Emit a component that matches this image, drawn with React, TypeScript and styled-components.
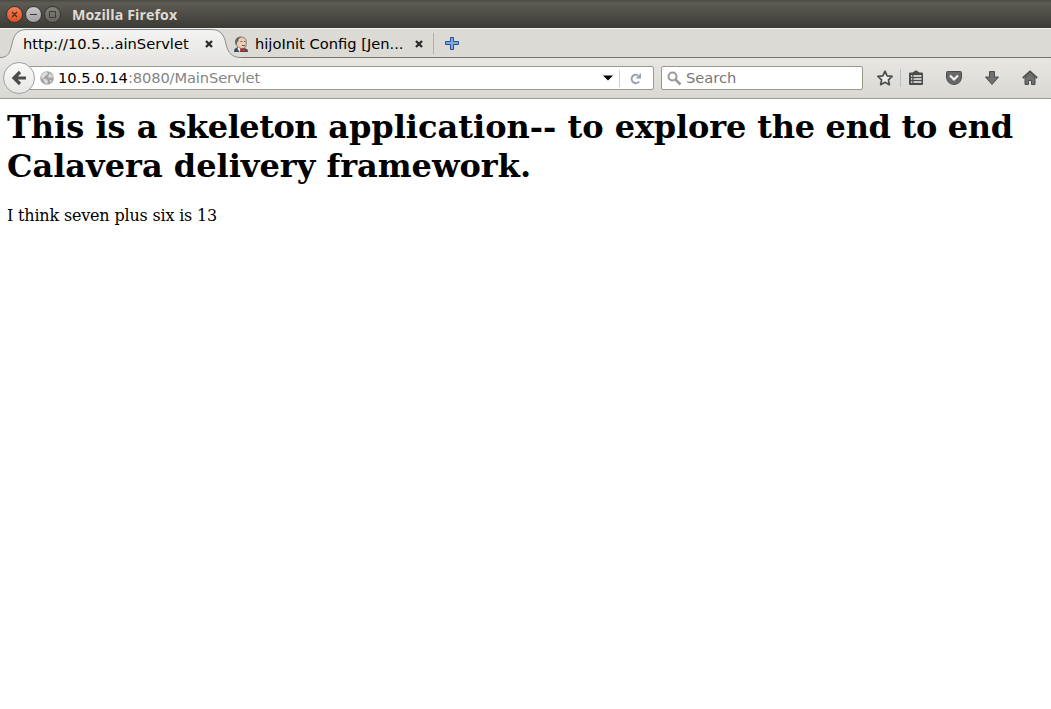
import React from "react";
import styled, { createGlobalStyle } from "styled-components";

const GlobalStyle = createGlobalStyle`
  body { margin: 0; background: #fff; overflow: hidden; }
  * { box-sizing: border-box; }
`;

const Window = styled.div`
  display: flex;
  flex-direction: column;
  width: 1051px;
  height: 709px;
  background: #fff;
  color: #000;
  font: 14.67px "DejaVu Sans", sans-serif;
  white-space: nowrap;
`;

const TitleBar = styled.header`
  display: flex;
  align-items: center;
  height: 28px;
  padding: 1px 0 0 6px;
  gap: 2px;
  background: linear-gradient(#4b4944 0, #5d5b52 3px, #3d3c37 27px, #3c3b37 28px);
`;

const WindowButton = styled.span<{ $kind: "close" | "min" | "max" }>`
  display: flex;
  width: 17px;
  height: 17px;
  border-radius: 50%;
  border: 1px solid #33322e;
  background: ${(p) =>
    p.$kind === "close"
      ? "linear-gradient(#f58058, #e3501f)"
      : p.$kind === "min"
        ? "linear-gradient(#c9c8c8, #a19f9f)"
        : "linear-gradient(#83817a, #66645d)"};
`;

const Title = styled.h1`
  margin: 0 0 0 9px;
  font: bold 14.2px/20px "Open Sans", sans-serif;
  letter-spacing: 0.1px;
  color: #dfdbd2;
`;

const TabStrip = styled.nav`
  display: flex;
  height: 30px;
  background: #dbdad5;
  border-top: 1px solid #f5f4f2;
  border-bottom: 1px solid #77756f;
`;

const Tab = styled.div<{ $width: number; $left: number }>`
  position: relative;
  display: flex;
  align-items: center;
  width: ${(p) => p.$width}px;
  height: 29px;
  padding: 1px 0 0 ${(p) => p.$left}px;
`;

const TabShape = styled.svg`
  position: absolute;
  left: 0;
  top: 0;
`;

const TabLabel = styled.span<{ $width: number; $gap?: number }>`
  position: relative;
  width: ${(p) => p.$width}px;
  padding: 0 0 2px ${(p) => p.$gap ?? 0}px;
`;

const Icon = styled.svg`
  position: relative;
  display: block;
  flex: none;
`;

const NewTab = styled.div`
  display: flex;
  align-items: center;
  margin: 4px 0 3px;
  padding-left: 11px;
  border-left: 1px solid #b0afaa;
`;

const Toolbar = styled.div`
  display: flex;
  align-items: center;
  height: 41px;
  padding: 0 12px 1px 3px;
  background: linear-gradient(#e7e6e2, #d9d8d3);
  border-bottom: 1px solid #9c988c;
`;

const BackButton = styled.div`
  position: relative;
  z-index: 1;
  display: flex;
  align-items: center;
  justify-content: center;
  width: 32px;
  height: 32px;
  border: 1px solid #9ba3aa;
  border-radius: 50%;
  background: linear-gradient(#fafaf9, #e8e7e4);
`;

const Field = styled.div<{ $width: number; $address?: boolean }>`
  display: flex;
  align-items: center;
  width: ${(p) => p.$width}px;
  height: 24px;
  margin-top: 1px;
  margin-left: ${(p) => (p.$address ? -8 : 7)}px;
  padding-left: ${(p) => (p.$address ? 12 : 5)}px;
  border: 1px solid #9c988c;
  border-radius: 2px;
  background: #fff;
`;

const Address = styled.span`
  width: 545px;
  margin-left: 4px;
  padding-bottom: 2px;
  color: #858585;
  letter-spacing: -0.11px;
  b { color: #000; font-weight: normal; letter-spacing: 0; }
`;

const Placeholder = styled.span`
  margin-left: 4px;
  padding-bottom: 2px;
  color: #777;
`;

const Reload = styled.div`
  display: flex;
  align-items: center;
  height: 17px;
  margin-left: 6px;
  padding-left: 9px;
  border-left: 1px solid #d0d0d0;
`;

const Actions = styled.div`
  display: flex;
  align-items: center;
  margin-left: auto;
  gap: 20px;
`;

const BookmarkPair = styled.div`
  display: flex;
  align-items: center;
`;

const Divider = styled.i`
  width: 1px;
  height: 18px;
  margin: 0 6px 0 6px;
  background: #b7bdc1;
`;

const Page = styled.main`
  padding: 9px 8px 0 7px;
  font: 16px/19px "DejaVu Serif", serif;
  white-space: normal;
`;

const Heading = styled.h1`
  margin: 0;
  font-size: 32px;
  line-height: 39px;
`;

const Tracked = styled.span<{ $by: number }>`
  letter-spacing: ${(p) => p.$by}px;
`;

const Paragraph = styled.p`
  margin: 20px 0 0;
  letter-spacing: -0.18px;
`;

const CloseMark = () => (
  <Icon width="10" height="10" viewBox="0 0 10 10">
    <path d="M2 2l6 6M8 2L2 8" stroke="#2b2b2b" strokeWidth="2.3" />
  </Icon>
);

const Globe = () => (
  <Icon width="14" height="14" viewBox="0 0 14 14">
    <circle cx="7" cy="7" r="6.8" fill="#a3a3a3" />
    <path d="M1 5l2-3 3-1 2 1-1 2-2 1-1 2-2 1zM9 2l3 2 1 3-2-1-1 1-2-1 1-2zM3 8l3 0 2 2-1 3-2-1zM10 9l2 0-2 3z" fill="#dcdcdc" />
  </Icon>
);

const Butler = () => (
  <Icon width="16" height="16" viewBox="0 0 16 16">
    <path d="M1 16l.5-3 4-2.500 6 1.500 3 1.500.5 2.500z" fill="#344b60" />
    <path d="M3 4C4 .5 12 0 13 4l.3 4c0 3-1.500 4.500-4.300 4.500C6 12.500 4 10.500 3 8z" fill="#eccdb4" stroke="#6b5a50" strokeWidth=".7" />
    <path d="M2.500 8.500L2 5C3 1.500 6 .3 9 .5 6.500 1.500 5.500 3 5.300 5L4 6.500v2.500z" fill="#6a655f" />
    <path d="M7.500 5.500h1.800M11 5.500h1.400M9 9.500h3" stroke="#5b4a40" strokeWidth=".9" />
    <path d="M5 11l3.500 2.500L6.500 16l-2-3z" fill="#eee" />
    <path d="M7 12.800l2.500 1 2.500-1v3l-2.500-1L7 15.800z" fill="#d52d32" />
  </Icon>
);

export default function App() {
  return (
    <Window>
      <GlobalStyle />
      <TitleBar>
        <WindowButton $kind="close">
          <Icon width="15" height="15" viewBox="0 0 15 15"><path d="M5 5l5 5M10 5l-5 5" stroke="#47301f" strokeWidth="1.200" /></Icon>
        </WindowButton>
        <WindowButton $kind="min">
          <Icon width="15" height="15" viewBox="0 0 15 15"><path d="M4 7.500h7" stroke="#3c3b37" /></Icon>
        </WindowButton>
        <WindowButton $kind="max">
          <Icon width="15" height="15" viewBox="0 0 15 15"><path d="M4.500 4.500h6v6h-6z" fill="none" stroke="#3c3b37" /></Icon>
        </WindowButton>
        <Title>Mozilla Firefox</Title>
      </TitleBar>
      <TabStrip>
        <Tab $width={233} $left={23}>
          <TabShape width="242" height="30" viewBox="0 0 242 30">
            <defs>
              <linearGradient id="tabFill" x1="0" y1="0" x2="0" y2="1">
                <stop offset="0" stopColor="#f4f4f2" />
                <stop offset="1" stopColor="#e7e6e2" />
              </linearGradient>
            </defs>
            <path d="M0 28.500C8 28.500 10 24 12 15C14 5 18 .5 27 .5H211C220 .5 224 5 226 15C228 24 232 28.500 241 28.500V30H0z" fill="url(#tabFill)" />
            <path d="M0 28.500C8 28.500 10 24 12 15C14 5 18 .5 27 .5H211C220 .5 224 5 226 15C228 24 232 28.500 241 28.500" fill="none" stroke="#8d8f8f" />
          </TabShape>
          <TabLabel $width={181}>http://10.5...ainServlet</TabLabel>
          <CloseMark />
        </Tab>
        <Tab $width={200} $left={0}>
          <Butler />
          <TabLabel $width={165} $gap={6}>hijoInit Config [Jen...</TabLabel>
          <CloseMark />
        </Tab>
        <NewTab>
          <Icon width="15" height="15" viewBox="0 0 15 15">
            <path d="M5.500 1.500h3v4h5v3h-5v5h-3v-5h-5v-3h5z" fill="#82a9df" stroke="#264f91" />
          </Icon>
        </NewTab>
      </TabStrip>
      <Toolbar>
        <BackButton>
          <Icon width="16" height="16" viewBox="0 0 16 16">
            <path d="M9 2L3 8l6 6M3 8h12" fill="none" stroke="#4b4b4b" strokeWidth="3.200" />
          </Icon>
        </BackButton>
        <Field $width={627} $address>
          <Globe />
          <Address><b>10.5.0.14</b>:8080/MainServlet</Address>
          <Icon width="10" height="6" viewBox="0 0 10 6"><path d="M0 .5h10L5 5.500z" fill="#000" /></Icon>
          <Reload>
            <Icon width="13" height="13" viewBox="0 0 13 13">
              <path d="M9 3.300A4.200 4.200 0 1 0 10.200 9.500" fill="none" stroke="#98a2ac" strokeWidth="2" />
              <path d="M12 1v5.500H6.500z" fill="#98a2ac" />
            </Icon>
          </Reload>
        </Field>
        <Field $width={202}>
          <Icon width="15" height="15" viewBox="0 0 15 15">
            <circle cx="5.500" cy="5.500" r="4" fill="none" stroke="#999" strokeWidth="2" />
            <path d="M8.500 8.500l5 5" stroke="#999" strokeWidth="2.500" />
          </Icon>
          <Placeholder>Search</Placeholder>
        </Field>
        <Actions>
          <BookmarkPair>
            <Icon width="18" height="18" viewBox="0 0 18 18">
              <path d="M9 2.200l2.100 4.600 5 .6-3.700 3.400 1 4.900L9 13.300l-4.400 2.400 1-4.900L1.900 7.400l5-.6z" fill="#eee" stroke="#4c4c4c" strokeWidth="1.700" strokeLinejoin="round" />
            </Icon>
            <Divider />
            <Icon width="18" height="18" viewBox="0 0 18 18">
              <path d="M3 3.500h2.500L9 1.200l3.500 2.300H15q1 0 1 1v10.500q0 1-1 1H3q-1 0-1-1V4.500q0-1 1-1z" fill="#4c4c4c" />
              <path d="M4 7h1.300M4 10h1.300M4 13h1.300M6.500 7H14.500M6.500 10H14.500M6.500 13H14.500" stroke="#f1f1ef" strokeWidth="1.700" />
            </Icon>
          </BookmarkPair>
          <Icon width="18" height="18" viewBox="0 0 18 18">
            <path d="M2.500 2.500h13q1 0 1 1V8q-.5 7-7.500 7.500Q2 15 1.500 8V3.500q0-1 1-1z" fill="#686868" stroke="#4c4c4c" />
            <path d="M5 6.500l4 4 4-4" fill="none" stroke="#f1f1ef" strokeWidth="2.200" />
          </Icon>
          <Icon width="18" height="18" viewBox="0 0 18 18">
            <path d="M6.500 2.500h5V8h4L9 15.500 2.500 8h4z" fill="#707070" stroke="#4c4c4c" />
          </Icon>
          <Icon width="18" height="18" viewBox="0 0 18 18">
            <path d="M4 9l5-4.500L14 9v6.500h-3.500v-4h-3v4H4z" fill="#707070" stroke="#4c4c4c" />
            <path d="M1.800 9L9 2.500 16.200 9" fill="none" stroke="#4c4c4c" strokeWidth="1.700" />
          </Icon>
        </Actions>
      </Toolbar>
      <Page>
        <Heading>
          This is a <Tracked $by={-0.5}>skeleton</Tracked> application-- to{" "}
          <Tracked $by={-0.15}>explore</Tracked> <Tracked $by={-0.32}>the end to end</Tracked>{" "}
          Calavera delivery framework.
        </Heading>
        <Paragraph>I think seven plus six is 13</Paragraph>
      </Page>
    </Window>
  );
}
